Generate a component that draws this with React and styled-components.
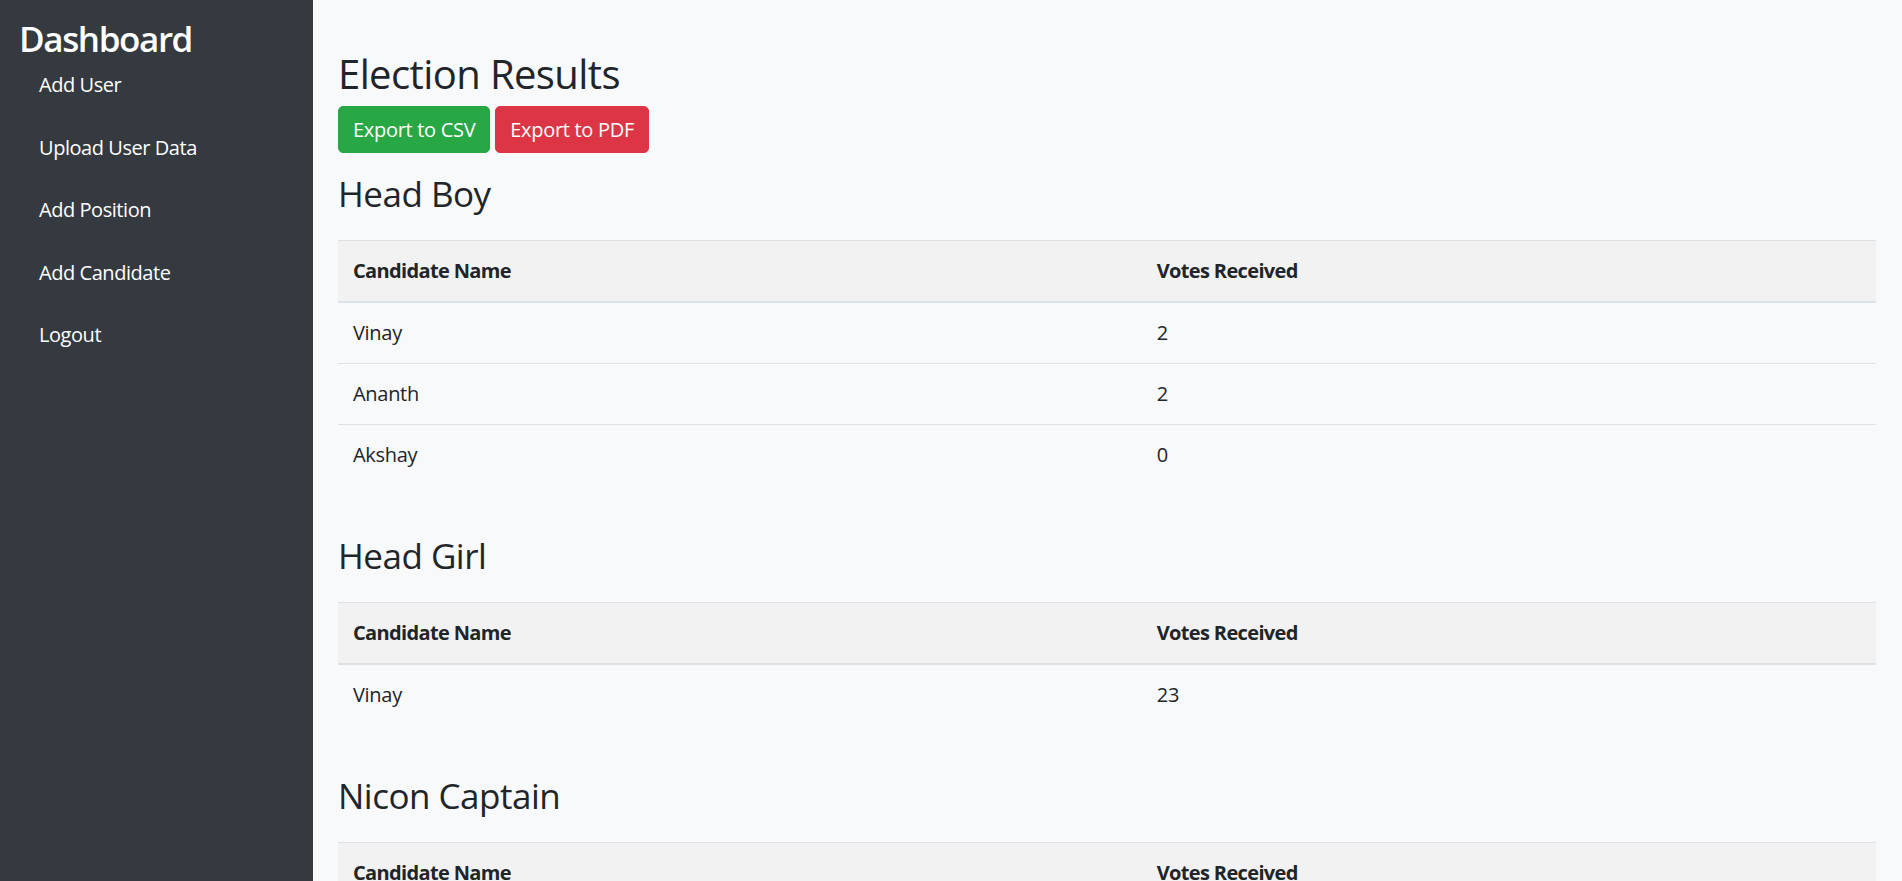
import React from "react";
import styled, { createGlobalStyle } from "styled-components";

const GlobalStyle = createGlobalStyle`
  html, body {
    margin: 0;
    padding: 0;
  }
  body {
    font-family: "Open Sans", "Noto Sans", "Liberation Sans", sans-serif;
    font-size: 20px;
    line-height: 1.5;
    color: #212529;
    background: #f8f9fa;
  }
  * {
    box-sizing: border-box;
  }
`;

const Layout = styled.div`
  display: flex;
  height: 100vh;
  overflow: hidden;
`;

const Sidebar = styled.aside`
  flex: 0 0 313px;
  background: #343a40;
  color: #fff;
  padding: 18px 20px 20px 19px;
`;

const Brand = styled.h3`
  margin: 0;
  font-size: 35px;
  font-weight: 600;
  line-height: 42px;
  letter-spacing: -1.4px;
`;

const NavList = styled.ul`
  list-style: none;
  margin: 0;
  padding: 0;
`;

const NavItem = styled.li`
  margin-bottom: 12.5px;
`;

const NavLink = styled.a`
  display: block;
  padding: 10px 20px;
  line-height: 30px;
  color: #fff;
  text-decoration: none;
  letter-spacing: -0.45px;
`;

const Main = styled.main`
  flex: 1;
  padding: 50px 26px 0 25px;
  overflow-y: auto;
  scrollbar-width: none;

  &::-webkit-scrollbar {
    display: none;
  }
`;

const Title = styled.h2`
  margin: 0 0 8px;
  font-size: 40px;
  font-weight: 500;
  line-height: 48px;
  letter-spacing: -0.6px;
`;

const ButtonRow = styled.div`
  display: flex;
  gap: 5px;
  margin-bottom: 20px;
`;

const Button = styled.button`
  font-family: inherit;
  font-size: 20px;
  line-height: 30px;
  padding: 7.5px 14px;
  border: 1.25px solid ${(p) => p.$color};
  border-radius: 5px;
  background: ${(p) => p.$color};
  color: #fff;
  cursor: pointer;
  letter-spacing: -0.3px;
`;

const Section = styled.section`
  & + & {
    margin-top: 50px;
  }
`;

const SectionTitle = styled.h3`
  margin: 0 0 25px;
  font-size: 35px;
  font-weight: 500;
  line-height: 42px;
  letter-spacing: -0.5px;
`;

const Table = styled.table`
  width: 100%;
  border-collapse: collapse;
  margin-bottom: 20px;
`;

const HeadCell = styled.th`
  text-align: left;
  font-weight: 700;
  padding: 15px;
  line-height: 30px;
  background: #f2f2f2;
  border-top: 1.25px solid #dee2e6;
  border-bottom: 2.5px solid #dee2e6;
  letter-spacing: -0.65px;
  width: ${(p) => p.$width || "auto"};
`;

const Cell = styled.td`
  padding: 15px;
  line-height: 30px;
  border-top: 1.25px solid #dee2e6;
  letter-spacing: -0.3px;
`;

const results = [
  {
    position: "Head Boy",
    candidates: [
      { name: "Vinay", votes: 2 },
      { name: "Ananth", votes: 2 },
      { name: "Akshay", votes: 0 },
    ],
  },
  {
    position: "Head Girl",
    candidates: [{ name: "Vinay", votes: 23 }],
  },
  {
    position: "Nicon Captain",
    candidates: [],
  },
];

const links = ["Add User", "Upload User Data", "Add Position", "Add Candidate", "Logout"];

const App = () => {
  return (
    <>
      <GlobalStyle />
      <Layout>
        <Sidebar>
          <Brand>Dashboard</Brand>
          <NavList>
            {links.map((link) => (
              <NavItem key={link}>
                <NavLink href="#">{link}</NavLink>
              </NavItem>
            ))}
          </NavList>
        </Sidebar>
        <Main>
          <Title>Election Results</Title>
          <ButtonRow>
            <Button $color="#28a745">Export to CSV</Button>
            <Button $color="#dc3545">Export to PDF</Button>
          </ButtonRow>
          {results.map((result) => (
            <Section key={result.position}>
              <SectionTitle>{result.position}</SectionTitle>
              <Table>
                <thead>
                  <tr>
                    <HeadCell $width="52.26%">Candidate Name</HeadCell>
                    <HeadCell>Votes Received</HeadCell>
                  </tr>
                </thead>
                <tbody>
                  {result.candidates.map((c) => (
                    <tr key={c.name}>
                      <Cell>{c.name}</Cell>
                      <Cell>{c.votes}</Cell>
                    </tr>
                  ))}
                </tbody>
              </Table>
            </Section>
          ))}
        </Main>
      </Layout>
    </>
  );
};

export default App;
